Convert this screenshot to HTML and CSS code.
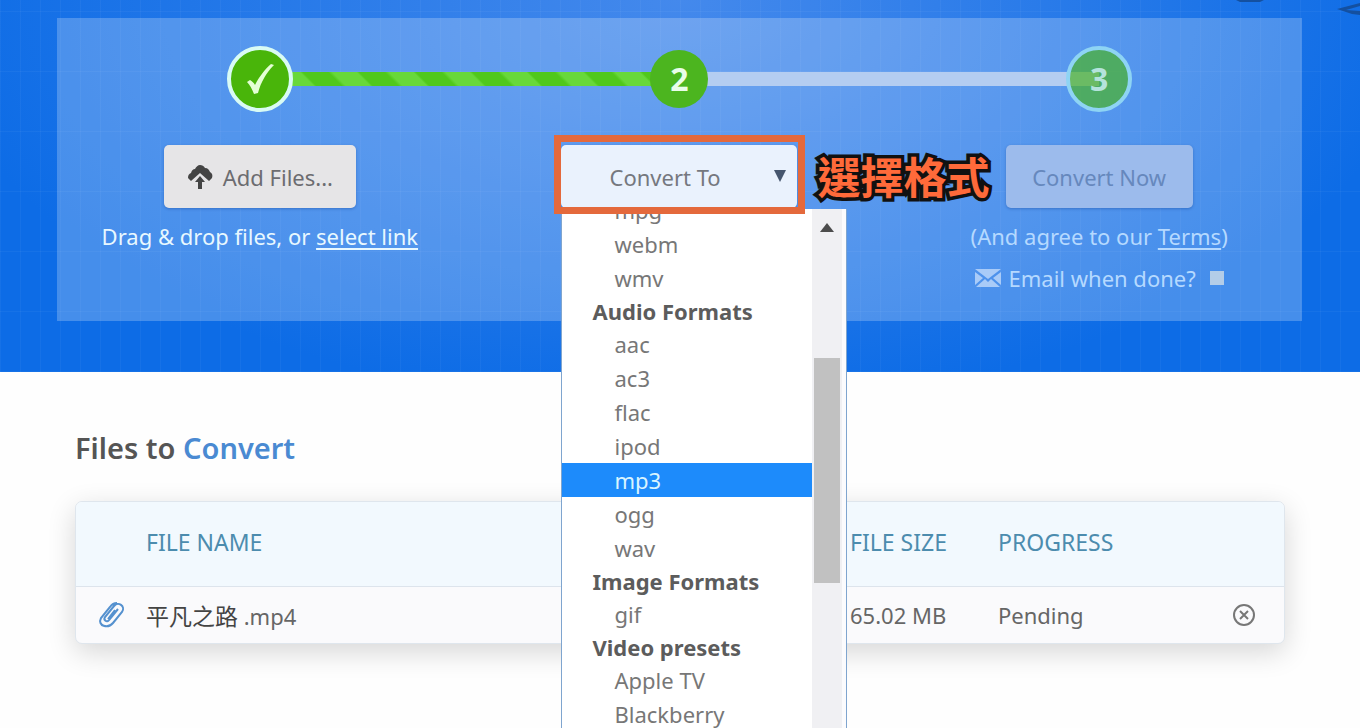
FILE: index.html
```html
<!DOCTYPE html>
<html lang="en">
<head>
    <meta charset="UTF-8">
    <meta name="viewport" content="width=device-width, initial-scale=1.0">
    <title>File Converter</title>
    <link rel="stylesheet" href="styles.css">
</head>
<body>

<section class="hero">
    <svg class="hero-art" width="130" height="18" viewBox="0 0 130 18" aria-hidden="true">
        <path d="M6 0h28l-4 2H10z"/>
        <path d="M107 9l23-6v3l-14 4 14 1v4l-8-1z"/>
    </svg>

    <form class="panel" onsubmit="return false">
        <div class="step done">
            <div class="step-head">
                <span class="circle">
                    <svg width="30" height="34" viewBox="0 0 30 34" aria-hidden="true">
                        <path d="M2 20l3-2c2 1 4 3 5 5C14 15 20 7 26 2l3 1C21 11 16 20 13 31l-4 1C7 27 5 23 2 20z"/>
                    </svg>
                </span>
            </div>
            <button type="button" class="btn add">
                <svg width="26" height="26" viewBox="0 0 26 26" aria-hidden="true">
                    <path d="M1 14c0-3 1-4 3-5 1-3 2-4 4-4 1-2 3-4 5-4 2 0 4 1 5 3 3 0 4 2 5 4 2 1 3 3 2 6l-3 3-9-8-9 8z"/>
                    <path d="M13 12l5 6h-3v7h-4v-7H8z"/>
                </svg>
                Add Files...
            </button>
            <p class="note">Drag &amp; drop files, or <a href="#">select link</a></p>
        </div>

        <div class="step current">
            <div class="step-head">
                <span class="circle">2</span>
            </div>
            <div class="picker">
                <select class="btn" aria-label="Convert To">
                    <option>Convert To</option>
                </select>
                <span class="arrow"></span>
                <div class="menu">
                    <ul role="listbox" aria-label="Formats">
                        <li role="option">mpg</li>
                        <li role="option">webm</li>
                        <li role="option">wmv</li>
                        <li class="group" role="presentation">Audio Formats</li>
                        <li role="option">aac</li>
                        <li role="option">ac3</li>
                        <li role="option">flac</li>
                        <li role="option">ipod</li>
                        <li class="selected" role="option" aria-selected="true">mp3</li>
                        <li role="option">ogg</li>
                        <li role="option">wav</li>
                        <li class="group" role="presentation">Image Formats</li>
                        <li role="option">gif</li>
                        <li class="group" role="presentation">Video presets</li>
                        <li role="option">Apple TV</li>
                        <li role="option">Blackberry</li>
                    </ul>
                    <div class="scrollbar"><span class="up"></span><span class="thumb"></span></div>
                </div>
                <div class="frame"></div>
                <strong class="callout" lang="zh-TW">選擇格式</strong>
            </div>
        </div>

        <div class="step waiting">
            <div class="step-head">
                <span class="circle">3</span>
            </div>
            <button type="button" class="btn convert">Convert Now</button>
            <p class="note">(And agree to our <a href="#">Terms</a>)</p>
            <label class="email">
                <svg width="26" height="20" viewBox="0 0 26 20" aria-hidden="true">
                    <path d="M0 1h26L13 11z"/>
                    <path d="M0 4l8 6-8 7zM26 4l-8 6 8 7zM1 19l9-8 3 3 3-3 9 8z"/>
                </svg>
                Email when done?
                <input type="checkbox">
            </label>
        </div>
    </form>
</section>

<section class="files">
    <h2>Files to <span>Convert</span></h2>
    <table>
        <thead>
            <tr>
                <th class="col-icon"></th>
                <th class="col-name">FILE NAME</th>
                <th class="col-size">FILE SIZE</th>
                <th>PROGRESS</th>
                <th class="col-remove"></th>
            </tr>
        </thead>
        <tbody>
            <tr>
                <td class="col-icon">
                    <svg width="28" height="28" viewBox="0 0 28 28" aria-hidden="true">
                        <path d="M20 8l-9 11c-2 3-6 0-4-3L16 5c4-5 12 0 8 6l-9 11c-5 6-16 3-12-5L12 6c2-3 4-4 7-4M17 9l-7 9"/>
                    </svg>
                </td>
                <td><span class="cjk" lang="zh">平凡之路</span> .mp4</td>
                <td>65.02 MB</td>
                <td>Pending</td>
                <td class="col-remove">
                    <button type="button" class="remove" aria-label="Remove">
                        <svg width="26" height="26" viewBox="0 0 26 26" aria-hidden="true">
                            <circle cx="13" cy="13" r="10"/>
                            <path d="M9 9l8 8M17 9l-8 8"/>
                        </svg>
                    </button>
                </td>
            </tr>
        </tbody>
    </table>
</section>

</body>
</html>
```
FILE: styles.css
```css
* {
    box-sizing: border-box;
}
body {
    margin: 0;
    height: 100vh;
    overflow: hidden;
    background: #fefefe;
    color: #666;
    font-family: "Noto Sans", "Open Sans", "Noto Sans CJK TC", sans-serif;
    font-size: 22px;
    line-height: 30px;
}
.hero {
    position: relative;
    padding: 18px 58px 51px 57px;
    background:
        repeating-linear-gradient(90deg, rgba(255, 255, 255, 0.04) 0 1px, transparent 1px 20px),
        repeating-linear-gradient(0deg, rgba(255, 255, 255, 0.04) 0 1px, transparent 1px 60px),
        radial-gradient(ellipse 55% 110% at 50% 0, #4489ec, #0d6ce6);
}
.hero-art {
    position: absolute;
    top: 0;
    right: 0;
    fill: #1450a0;
}
.panel {
    display: grid;
    grid-template-columns: repeat(3, 1fr);
    gap: 14px;
    min-height: 303px;
    padding-top: 28px;
    background: rgba(255, 255, 255, 0.23);
}
.step {
    display: flex;
    flex-direction: column;
    align-items: center;
    color: #e8f8ff;
}
.step-head {
    position: relative;
    display: flex;
    align-items: center;
    justify-content: center;
    width: 100%;
    height: 66px;
    margin-bottom: 33px;
}
/* line that runs to the next circle */
.done .step-head::before,
.current .step-head::before {
    content: "";
    position: absolute;
    top: 26px;
    left: 50%;
    width: calc(100% + 14px);
    height: 14px;
    background: #b4cdf1;
}
.done .step-head::before {
    background: repeating-linear-gradient(45deg, #50c81c 0 18px, #68d83a 21px 38px, #50c81c 40px);
}
.circle {
    position: relative;
    z-index: 1;
    display: flex;
    align-items: center;
    justify-content: center;
    width: 66px;
    height: 66px;
    border: 4px solid #d9fbf4;
    border-radius: 50%;
    background: #49b50a;
    color: #e9fde9;
    font-size: 32px;
    font-weight: bold;
}
.circle svg {
    fill: #e4ffd5;
}
.current .circle {
    width: 58px;
    height: 58px;
    border: 0;
    background: #4cb51f;
}
.waiting {
    color: #b5d9ff;
}
.waiting .circle {
    border-color: #8ed4f4;
    background: rgba(75, 180, 40, 0.7);
    color: #b5e3dc;
}
.btn {
    display: flex;
    align-items: center;
    justify-content: center;
    height: 63px;
    border: 0;
    border-radius: 5px;
    background: #e6e5e7;
    color: #6c6c70;
    font: inherit;
    box-shadow: 0 1px 3px rgba(0, 40, 120, 0.3);
}
.add {
    gap: 10px;
    width: 192px;
}
.add svg {
    fill: #444;
}
.convert {
    width: 187px;
    background: #9cbbec;
    color: #6688bd;
}
.note {
    margin: 13px 0 0;
}
.note a {
    color: inherit;
    text-underline-offset: 3px;
}
.email {
    display: flex;
    align-items: center;
    gap: 8px;
    margin-top: 12px;
}
.email svg {
    fill: #a9cbf8;
}
.email input {
    appearance: none;
    width: 14px;
    height: 14px;
    margin: 0 0 0 6px;
    background: #b3cde8;
}
.picker {
    position: relative;
    width: 236px;
}
.picker select {
    display: block;
    width: 100%;
    padding: 0 48px;
    appearance: none;
    background: #eaf2fd;
    color: #75787f;
}
.arrow {
    position: absolute;
    top: 25px;
    right: 11px;
    border: 6px solid transparent;
    border-top: 12px solid #46566e;
    border-bottom: 0;
}
.frame {
    position: absolute;
    inset: -10px -8px -6px -7px;
    border: 7px solid #e4693c;
}
.callout {
    position: absolute;
    top: 6px;
    left: 256px;
    color: #ff6a3a;
    font-family: "Noto Sans CJK TC", sans-serif;
    font-size: 43px;
    line-height: 48px;
    white-space: nowrap;
    -webkit-text-stroke: 7px #111;
    paint-order: stroke fill;
}
.menu {
    position: absolute;
    z-index: 2;
    top: 64px;
    left: 0;
    display: flex;
    width: 286px;
    height: calc(100vh - 209px);
    overflow: hidden;
    border: 1px solid #7fa5cf;
    border-width: 0 1px;
    background: #fff;
    color: #777;
}
.frame,
.callout {
    z-index: 3;
}
.menu ul {
    flex: 1;
    margin: -16px 0 0;
    padding: 0;
    list-style: none;
}
.menu li {
    height: 34px;
    padding-left: 52px;
    line-height: 34px;
}
.menu .group {
    height: 32px;
    padding-left: 30px;
    color: #5c5c5c;
    font-weight: bold;
    line-height: 32px;
}
.menu .selected {
    background: #1d8bfb;
    color: #d9f4ff;
}
.scrollbar {
    display: flex;
    flex-direction: column;
    align-items: center;
    width: 34px;
    border-right: 4px solid #fbfbfd;
    background: #f0f0f3;
}
.up {
    margin: 14px 0 126px;
    border: 7px solid transparent;
    border-top: 0;
    border-bottom: 9px solid #4c4c4c;
}
.thumb {
    width: 26px;
    height: 225px;
    background: #c1c1c1;
}
.files {
    padding: 58px 75px 40px;
}
h2 {
    margin: 0 0 35px;
    color: #555;
    font-size: 29px;
    font-weight: 600;
    line-height: 36px;
}
h2 span {
    color: #4a8ad2;
}
table {
    width: 100%;
    table-layout: fixed;
    border-collapse: separate;
    border-spacing: 0;
    border: 1px solid #dfe6ed;
    border-radius: 7px;
    overflow: hidden;
    background: #fafafc;
    box-shadow: 0 8px 28px rgba(0, 0, 0, 0.16);
}
th,
td {
    padding: 0;
    text-align: left;
    font-weight: normal;
}
th {
    height: 85px;
    padding-bottom: 4px;
    border-bottom: 1px solid #dde4ec;
    background: #f2f9fe;
    color: #4c8cae;
    font-size: 23px;
}
td {
    height: 56px;
}
.cjk {
    color: #444;
    font-family: "Noto Sans CJK SC", sans-serif;
    font-size: 23px;
}
.col-icon {
    width: 70px;
    padding-left: 22px;
}
.col-icon svg {
    display: block;
    fill: none;
    stroke: #5591cf;
    stroke-width: 2;
}
.col-name {
    width: 704px;
}
.col-size {
    width: 148px;
}
.col-remove {
    width: 53px;
}
.remove {
    display: block;
    padding: 0;
    border: 0;
    background: none;
}
.remove svg {
    display: block;
    fill: none;
    stroke: #777;
    stroke-width: 2;
}
```
